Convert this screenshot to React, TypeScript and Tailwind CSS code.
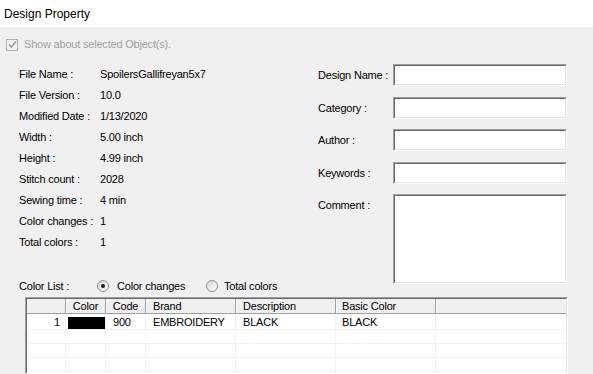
import React from "react";

const info = [
  ["File Name :", "SpoilersGallifreyan5x7"],
  ["File Version :", "10.0"],
  ["Modified Date :", "1/13/2020"],
  ["Width :", "5.00 inch"],
  ["Height :", "4.99 inch"],
  ["Stitch count :", "2028"],
  ["Sewing time :", "4 min"],
  ["Color changes :", "1"],
  ["Total colors :", "1"],
];

const fields = [
  { label: "Design Name :", mt: "mt-0" },
  { label: "Category :", mt: "mt-[11px]" },
  { label: "Author :", mt: "mt-[10px]" },
  { label: "Keywords :", mt: "mt-[11px]" },
];

function Sunken({ className, children }: { className: string; children?: React.ReactNode }) {
  return (
    <div className={`border border-t-[#a0a0a0] border-l-[#a0a0a0] border-b-white border-r-white ${className}`}>
      <div className="h-full w-full border border-t-[#696969] border-l-[#696969] border-b-[#e3e3e3] border-r-[#e3e3e3] bg-white">
        {children}
      </div>
    </div>
  );
}

function Radio({ checked }: { checked?: boolean }) {
  return (
    <div className="flex h-[12px] w-[12px] shrink-0 items-center justify-center rounded-full border border-[#8f8f8f] bg-gradient-to-br from-[#d8d8d8] to-white">
      {checked && <div className="h-[4px] w-[4px] rounded-full bg-[#1a1a1a]" />}
    </div>
  );
}

const cols = [
  { w: "w-[39px]", title: "", align: "justify-center" },
  { w: "w-[40px]", title: "Color", align: "justify-center" },
  { w: "w-[40px]", title: "Code", align: "justify-center" },
  { w: "w-[90px]", title: "Brand", align: "justify-start pl-[7px]" },
  { w: "w-[100px]", title: "Description", align: "justify-start pl-[7px]" },
  { w: "w-[100px]", title: "Basic Color", align: "justify-start pl-[6px]" },
];

function DataRow({ first }: { first?: boolean }) {
  const cell = "h-full border-r border-[#f0f0f0] flex items-center";
  return (
    <div className="flex h-[14px] border-b border-[#f0f0f0]">
      <div className={`${cell} w-[39px] justify-end pr-[5px]`}>{first ? "1" : ""}</div>
      <div className={`${cell} w-[40px] items-end pl-[2px]`}>
        {first && <div className="h-[12px] w-[37px] bg-black" />}
      </div>
      <div className={`${cell} w-[40px] pl-[7px]`}>{first ? "900" : ""}</div>
      <div className={`${cell} w-[90px] pl-[7px]`}>{first ? "EMBROIDERY" : ""}</div>
      <div className={`${cell} w-[100px] pl-[7px]`}>{first ? "BLACK" : ""}</div>
      <div className={`${cell} w-[100px] pl-[6px]`}>{first ? "BLACK" : ""}</div>
      <div className="flex-1" />
    </div>
  );
}

export default function App() {
  return (
    <div
      className="flex h-[374px] w-[593px] flex-col overflow-hidden bg-[#f0f0f0] text-[11px] tracking-[-0.2px] text-black"
      style={{ fontFamily: '"Liberation Sans", Arial, sans-serif' }}
    >
      <div className="flex h-[27px] shrink-0 items-center bg-white pl-[4px] pt-[1px] text-[12px] tracking-normal">
        Design Property
      </div>

      <div className="ml-[6px] mt-[11px] flex h-[13px] items-center gap-[6px] text-[#a0a0a0]">
        <div className="flex h-[12px] w-[12px] items-center justify-center border border-[#b1b1b1] bg-[#f4f4f4]">
          <svg width="9" height="9" viewBox="0 0 9 9">
            <path d="M1 4.5 L3.5 7 L8 1.5" fill="none" stroke="#9a9a9a" strokeWidth="1.6" />
          </svg>
        </div>
        <span>Show about selected Object(s).</span>
      </div>

      <div className="mt-[13px] flex pl-[19px]">
        <div className="flex w-[299px] flex-col">
          {info.map(([k, v]) => (
            <div key={k} className="flex h-[21px] items-center">
              <span className="w-[81px]">{k}</span>
              <span>{v}</span>
            </div>
          ))}
          <div className="mt-[25px] flex h-[16px] items-center">
            <span className="w-[78px]">Color List :</span>
            <Radio checked />
            <span className="ml-[8px] w-[89px]">Color changes</span>
            <Radio />
            <span className="ml-[6px]">Total colors</span>
          </div>
        </div>

        <div className="flex flex-col">
          {fields.map((f) => (
            <div key={f.label} className={`flex items-start ${f.mt}`}>
              <span className="h-[22px] w-[75px] leading-[22px]">{f.label}</span>
              <Sunken className="h-[22px] w-[174px]" />
            </div>
          ))}
          <div className="mt-[10px] flex items-start">
            <span className="h-[22px] w-[75px] leading-[22px]">Comment :</span>
            <Sunken className="h-[90px] w-[174px]" />
          </div>
        </div>
      </div>

      <div className="ml-[25px] mt-[3px] w-[543px] flex-1 border border-t-[#a0a0a0] border-l-[#a0a0a0] border-r-white border-b-white">
        <div className="h-full border border-t-[#696969] border-l-[#696969] border-r-[#e3e3e3] border-b-0 bg-white">
          <div className="flex h-[15px] border-b border-[#a0a0a0] bg-[#f0f0f0]">
            {cols.map((c, i) => (
              <div
                key={i}
                className={`flex h-full items-center border-r border-[#a0a0a0] shadow-[1px_0_0_white] ${c.w} ${c.align}`}
              >
                {c.title}
              </div>
            ))}
            <div className="flex-1" />
          </div>
          <div className="h-[2px]" />
          <DataRow first />
          <DataRow />
          <DataRow />
          <DataRow />
        </div>
      </div>
    </div>
  );
}
